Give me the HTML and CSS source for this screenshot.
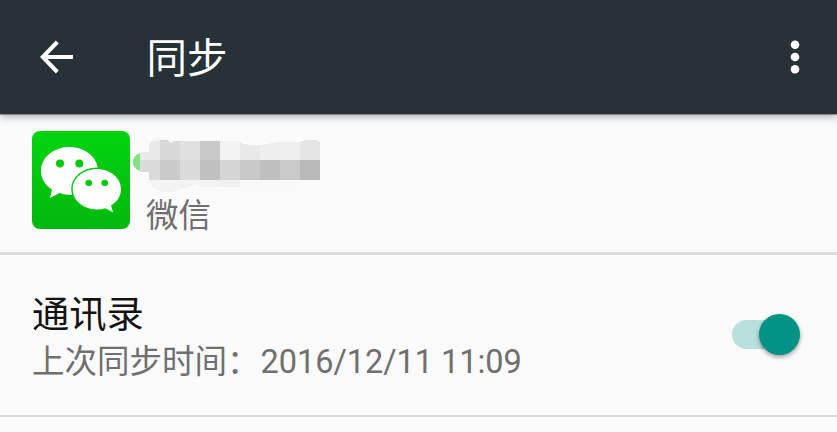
FILE: index.html
```html
<!DOCTYPE html>
<html lang="zh-CN">
<head>
<meta charset="utf-8">
<title>同步</title>
<link rel="stylesheet" href="styles.css">
</head>
<body>
<header class="toolbar">
  <svg class="back" width="34" height="34" viewBox="0 0 34 34"><path d="M33 17H3M17.3 2 2.8 17l14.5 15" fill="none" stroke="#fff" stroke-width="4"/></svg>
  <h1 class="title">同步</h1>
  <svg class="more" width="10" height="36" viewBox="0 0 10 36" fill="#fff"><circle cx="5" cy="5.7" r="4.3"/><circle cx="5" cy="18" r="4.3"/><circle cx="5" cy="30.3" r="4.3"/></svg>
</header>
<section class="account">
  <svg class="logo" width="98" height="98" viewBox="0 0 98 98">
    <defs><linearGradient id="green" x1="0" y1="0" x2="0" y2="1"><stop offset="0" stop-color="#02d50f"/><stop offset="1" stop-color="#02b70d"/></linearGradient></defs>
    <rect width="98" height="98" rx="8" fill="url(#green)"/>
    <path d="M37.500 16C21.500 16 9 26.700 9 40c0 7.700 4.200 14.300 11 18.500L18 67l9.500-4.900c3.500 1.300 7.500 2 12 1.900C52 64 66 54 66 40 66 26.700 53.500 16 37.500 16z" fill="#fff"/>
    <path d="M65 38C51.500 38 40.700 47 40.700 58.200S51.500 78.400 65 78.400c3 0 5.700-.4 8.300-1.200L81 81.200l-2-6.700c6.200-3.900 10-9.600 10-16.300C89 47 78.300 38 65 38z" fill="#fff" stroke="#02c60e" stroke-width="3" paint-order="stroke"/>
    <g fill="#02c80e"><circle cx="28" cy="32.600" r="4"/><circle cx="47.300" cy="32.600" r="4"/><circle cx="56.700" cy="52" r="3.300"/><circle cx="72.700" cy="52" r="3.300"/></g>
  </svg>
  <div class="account-text">
    <svg class="mosaic" width="188" height="50" viewBox="0 0 188 50" shape-rendering="crispEdges">
      <path d="M7 15Q0 18 0 24t7 9z" fill="#82e183"/>
      <path d="M7 14h9V7q1-4 5-5h6v20H7z" fill="#e9e9e9"/>
      <path d="M7 22h20v20H16v-8H7z" fill="#dadada"/>
      <path d="M19 2q7-5 16-1v2H19z" fill="#f5f5f5"/>
      <path d="M27 2h7l4 3 3-2h6v19H27z" fill="#d8d8d8"/>
      <path d="M47 3h20v19H47z" fill="#e0e0e0"/>
      <path d="M67 3h20v19H67z" fill="#c9c9c9"/>
      <path d="M87 3h20v19H87z" fill="#f3f3f3"/>
      <path d="M107 4q6 4 20 3v15h-20z" fill="#e9e9e9"/>
      <path d="M127 7 147 4v18h-20z" fill="#eeeeee"/>
      <path d="M147 4h20v18h-20z" fill="#efefef"/>
      <path d="M167 4q5-3 16-2l4 2v18h-20z" fill="#e5e5e5"/>
      <path d="M27 22h20v20H27z" fill="#cacaca"/>
      <path d="M47 22h20v20H47z" fill="#dadada"/>
      <path d="M67 22h20v20H67z" fill="#c0c0c0"/>
      <path d="M87 22h20v20H87z" fill="#d5d5d5"/>
      <path d="M107 22h20v20h-20z" fill="#c8c8c8"/>
      <path d="M127 22h20v20h-20z" fill="#bfbfbf"/>
      <path d="M147 22h20v20h-20z" fill="#cbcbcb"/>
      <path d="M167 22h20v20h-20z" fill="#bababa"/>
      <path d="M17 42h30v9q-5 3-13 3-16 0-17-12z" fill="#f3f3f3"/>
      <path d="M47 42h40v7H70l-8-3-9 4-6 1z" fill="#f2f2f2"/>
      <path d="M87 42h20v7H87z" fill="#f0f0f0"/>
      <path d="M107 42h60v7h-60z" fill="#f9f9f9"/>
    </svg>
    <p class="summary">微信</p>
  </div>
</section>
<section class="item">
  <div class="item-text">
    <h2 class="item-title">通讯录</h2>
    <p class="summary">上次同步时间：<span class="date">2016/12/11 11:09</span></p>
  </div>
  <div class="switch"><div class="thumb"></div></div>
</section>
</body>
</html>
```
FILE: styles.css
```css
* { box-sizing: border-box; }
body {
  margin: 0;
  background: #fafafa;
  font-family: Roboto, "Noto Sans CJK SC", sans-serif;
  overflow: hidden;
}
h1, h2, p { margin: 0; font-weight: 400; }
svg { display: block; flex: none; }
.toolbar {
  height: 114px;
  display: flex;
  align-items: center;
  padding: 0 37px 0 40px;
  background: #263238;
  box-shadow: 0 1px 1px rgba(0,0,0,.3), 0 3px 8px rgba(0,0,0,.28);
}
.title {
  flex: 1;
  margin-left: 72.500px;
  padding-top: 3px;
  font-size: 40.5px;
  line-height: 60px;
  color: #fff;
}
.account {
  height: 141px;
  display: flex;
  padding: 17px 32px 0;
  border-bottom: 3px solid #dcdcdc;
}
.account-text { padding: 7px 0 0 3px; }
.mosaic { overflow: visible; }
.account-text .summary { margin: 4px 0 0 13px; }
.summary {
  font-size: 32.5px;
  line-height: 48px;
  color: #6f6f6f;
  white-space: nowrap;
}
.date { margin-left: 1px; letter-spacing: -.05px; }
.item {
  height: 162px;
  display: flex;
  justify-content: space-between;
  padding: 36px 37px 0 32px;
  border-bottom: 2px solid #d6d6d6;
}
.item-title {
  padding-top: 1px;
  font-size: 37.3px;
  line-height: 46px;
  color: #141414;
}
.switch {
  width: 68px;
  height: 29px;
  margin-top: 29px;
  display: flex;
  align-items: center;
  justify-content: flex-end;
  border-radius: 15px;
  background: linear-gradient(90deg, #b9e0dc 55px, transparent 55px);
}
.thumb {
  width: 41px;
  height: 41px;
  flex: none;
  border-radius: 50%;
  background: #009386;
  box-shadow: 0 2px 4px rgba(0,0,0,.38);
}
```
